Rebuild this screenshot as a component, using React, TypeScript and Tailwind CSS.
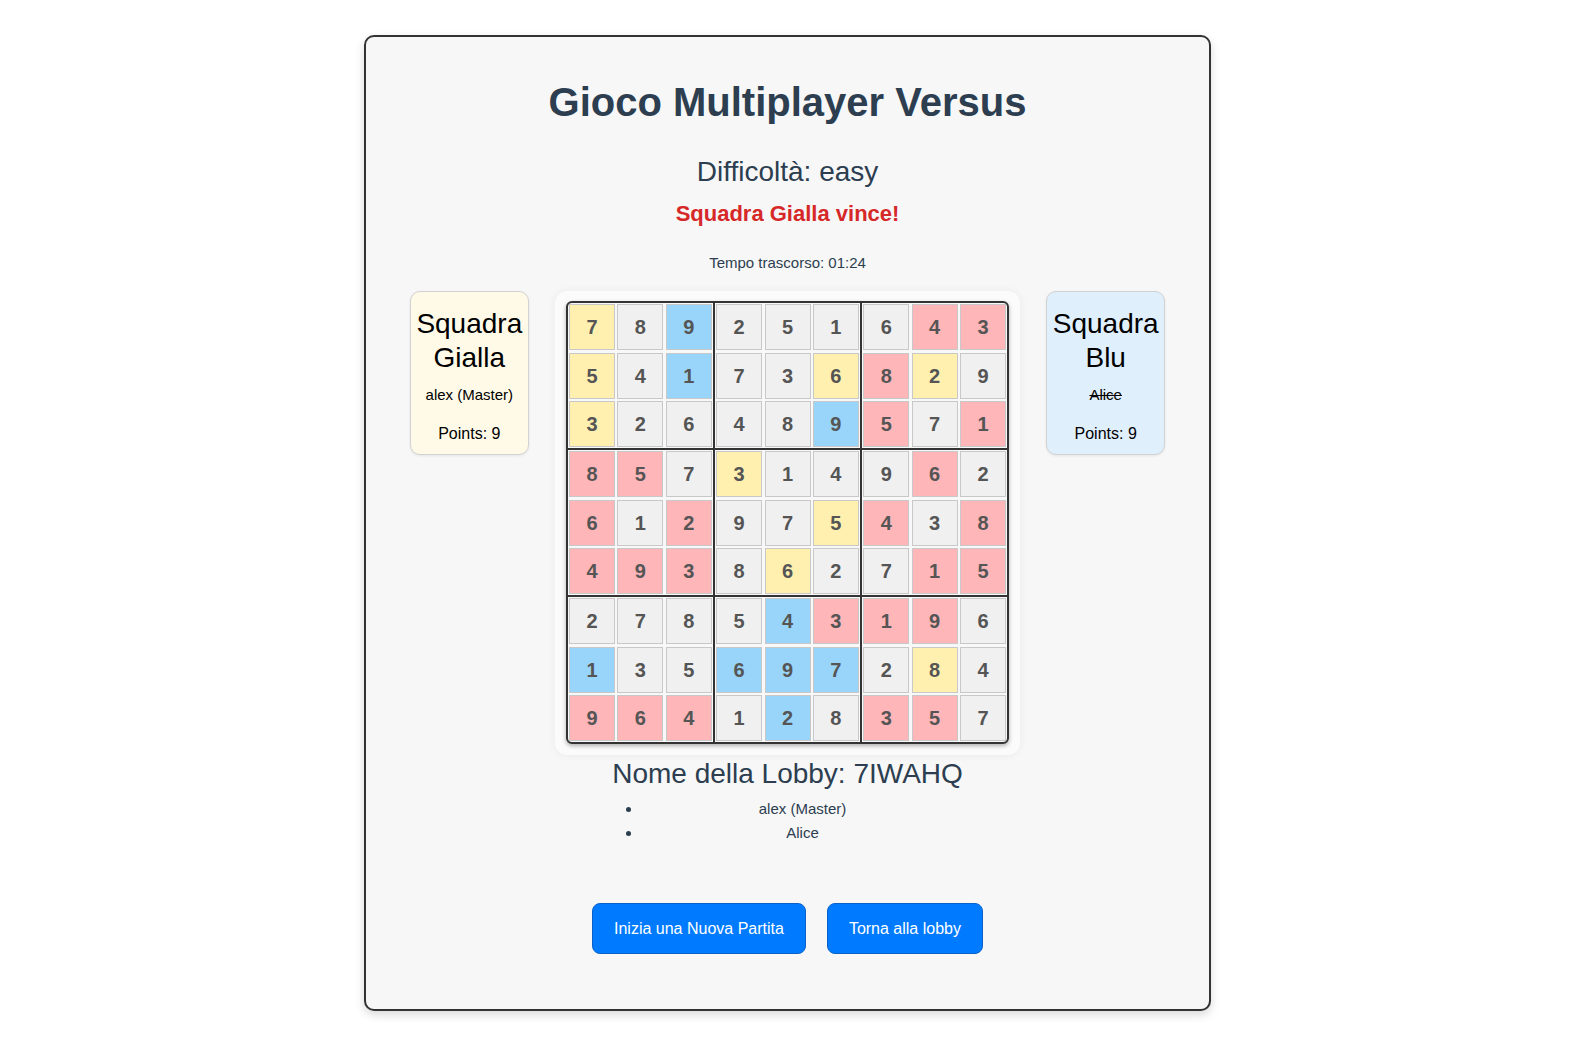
import React from "react";

type Tint = "Y" | "B" | "R" | "G";

// each cell: digit + owner colour (Y = gialla, B = blu, R = errore, G = neutro)
const BOARD: string[] = [
  "7Y 8G 9B 2G 5G 1G 6G 4R 3R",
  "5Y 4G 1B 7G 3G 6Y 8R 2Y 9G",
  "3Y 2G 6G 4G 8G 9B 5R 7G 1R",
  "8R 5R 7G 3Y 1G 4G 9G 6R 2G",
  "6R 1G 2R 9G 7G 5Y 4R 3G 8R",
  "4R 9R 3R 8G 6Y 2G 7G 1R 5R",
  "2G 7G 8G 5G 4B 3R 1R 9R 6G",
  "1B 3G 5G 6B 9B 7B 2G 8Y 4G",
  "9R 6R 4R 1G 2B 8G 3R 5R 7G",
];

const TINT_CLASS: Record<Tint, string> = {
  Y: "bg-[#fff0b0]",
  B: "bg-[#99d5fb]",
  R: "bg-[#ffb6b9]",
  G: "bg-[#f0f0f0]",
};

const FONT = { fontFamily: '"Liberation Sans", Arial, Helvetica, sans-serif' };

const Cell: React.FC<{ value: string; tint: Tint }> = ({ value, tint }) => (
  <div
    className={`w-[46px] h-[46px] m-[1.2px] border border-[#c8c8c8] flex items-center justify-center text-[20px] font-bold text-[#555] ${TINT_CLASS[tint]}`}
  >
    {value}
  </div>
);

const Board: React.FC = () => {
  const rows = BOARD.map((r) => r.split(" ").map((c) => ({ v: c[0], t: c[1] as Tint })));
  return (
    <div className="border-2 border-[#333] rounded-[6px] bg-[#f8f8f8] shadow-[0_2px_4px_rgba(0,0,0,0.3)] flex flex-col overflow-hidden">
      {rows.map((row, ri) => (
        <React.Fragment key={ri}>
          {(ri === 3 || ri === 6) && <div className="h-[2px] bg-[#333]" />}
          <div className="flex">
            {row.map((cell, ci) => (
              <React.Fragment key={ci}>
                {(ci === 3 || ci === 6) && <div className="w-[2px] self-stretch bg-[#333]" />}
                <Cell value={cell.v} tint={cell.t} />
              </React.Fragment>
            ))}
          </div>
        </React.Fragment>
      ))}
    </div>
  );
};

const TeamCard: React.FC<{
  name: string[];
  player: string;
  points: number;
  bg: string;
  struck?: boolean;
}> = ({ name, player, points, bg, struck }) => (
  <div
    className={`w-[119px] h-[164px] border border-[#d2d2d2] rounded-[10px] shadow-[0_1px_3px_rgba(0,0,0,0.08)] pt-[15px] text-center text-black ${bg}`}
  >
    <h3 className="text-[28px] leading-[34px]">
      {name.map((n) => (
        <div key={n}>{n}</div>
      ))}
    </h3>
    <p className={`mt-[11px] text-[15px] leading-[18px] ${struck ? "line-through" : ""}`}>{player}</p>
    <p className="mt-[20px] text-[16px] leading-[20px]">Points: {points}</p>
  </div>
);

export default function App() {
  return (
    <div className="min-h-screen bg-white flex items-start justify-center pt-[35px] pb-[20px] pr-[13px]" style={FONT}>
      <div className="w-[847px] border-2 border-[#333] rounded-[10px] bg-[#f7f7f7] shadow-[0_4px_10px_rgba(0,0,0,0.15)] pt-[42px] pb-[55px] flex flex-col items-center text-[#2c3e50]">
        <h1 className="text-[40px] leading-[46px] font-bold">Gioco Multiplayer Versus</h1>
        <h2 className="mt-[31px] text-[28px] leading-[32px]">Difficoltà: easy</h2>
        <p className="mt-[13px] text-[22px] leading-[26px] font-bold text-[#d62828]">Squadra Gialla vince!</p>
        <p className="mt-[27px] text-[15px] leading-[18px]">Tempo trascorso: 01:24</p>

        <div className="mt-[19px] flex items-start justify-center gap-[26px]">
          <TeamCard name={["Squadra", "Gialla"]} player="alex (Master)" points={9} bg="bg-[#fffae8]" />
          <div className="bg-[#fbfbfb] rounded-[12px] shadow-[0_0_8px_rgba(0,0,0,0.06)] pt-[10px] pb-[11px] px-[11px]">
            <Board />
          </div>
          <TeamCard name={["Squadra", "Blu"]} player="Alice" points={9} bg="bg-[#e0effc]" struck />
        </div>

        <h2 className="mt-[3px] text-[28px] leading-[32px]">Nome della Lobby: 7IWAHQ</h2>
        <ul className="mt-[7px] w-[362px] mr-[10px] pl-[40px] list-disc text-center text-[15px] leading-[24px]">
          <li>alex (Master)</li>
          <li>Alice</li>
        </ul>

        <div className="mt-[58px] flex gap-[21px]">
          <button className="h-[51px] px-[21px] rounded-[8px] bg-[#007bff] border border-[#0a62c9] text-white text-[16px]">
            Inizia una Nuova Partita
          </button>
          <button className="h-[51px] px-[21px] rounded-[8px] bg-[#007bff] border border-[#0a62c9] text-white text-[16px]">
            Torna alla lobby
          </button>
        </div>
      </div>
    </div>
  );
}
